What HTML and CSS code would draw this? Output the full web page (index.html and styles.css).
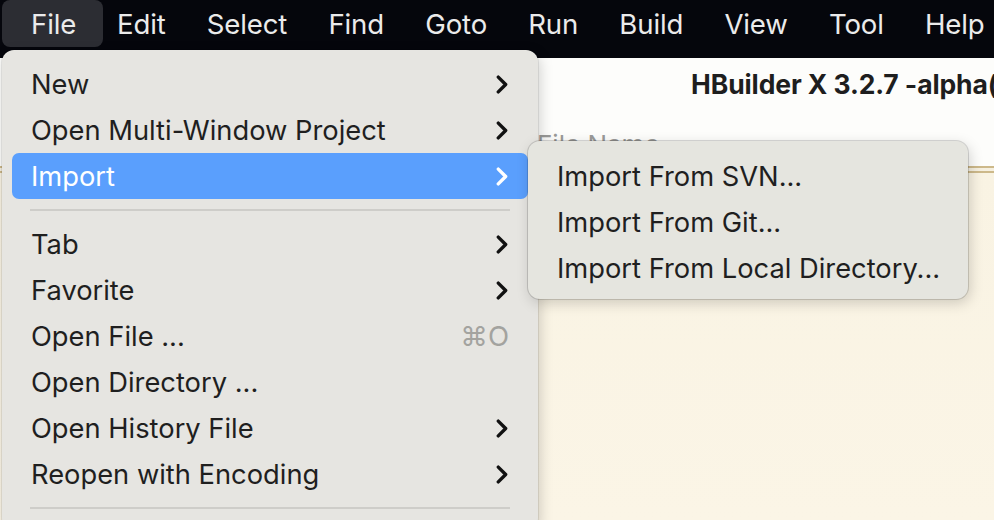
FILE: index.html
```html
<!DOCTYPE html>
<html>
<head>
<meta charset="utf-8">
<link rel="stylesheet" href="styles.css">
</head>
<body>
<div class="screen">
  <div class="menubar">
    <div class="mb-item active">File</div>
    <div class="mb-item">Edit</div>
    <div class="mb-item">Select</div>
    <div class="mb-item">Find</div>
    <div class="mb-item">Goto</div>
    <div class="mb-item">Run</div>
    <div class="mb-item">Build</div>
    <div class="mb-item">View</div>
    <div class="mb-item">Tool</div>
    <div class="mb-item">Help</div>
  </div>
  <div class="window">
    <div class="titlebar"><span class="title">HBuilder X 3.2.7 -alpha(</span></div>
    <div class="filename-row"><span class="filename">File Name</span></div>
    <div class="rule"></div>
    <div class="editor"></div>
  </div>

  <div class="menu">
    <div class="item"><span>New</span><svg class="chev" viewBox="0 0 12 18"><polyline points="2,2 9,9 2,16"/></svg></div>
    <div class="item"><span>Open Multi-Window Project</span><svg class="chev" viewBox="0 0 12 18"><polyline points="2,2 9,9 2,16"/></svg></div>
    <div class="item selected"><span>Import</span><svg class="chev" viewBox="0 0 12 18"><polyline points="2,2 9,9 2,16"/></svg></div>
    <div class="sep"></div>
    <div class="item"><span>Tab</span><svg class="chev" viewBox="0 0 12 18"><polyline points="2,2 9,9 2,16"/></svg></div>
    <div class="item"><span>Favorite</span><svg class="chev" viewBox="0 0 12 18"><polyline points="2,2 9,9 2,16"/></svg></div>
    <div class="item"><span>Open File ...</span><span class="shortcut">⌘O</span></div>
    <div class="item"><span>Open Directory ...</span></div>
    <div class="item"><span>Open History File</span><svg class="chev" viewBox="0 0 12 18"><polyline points="2,2 9,9 2,16"/></svg></div>
    <div class="item"><span>Reopen with Encoding</span><svg class="chev" viewBox="0 0 12 18"><polyline points="2,2 9,9 2,16"/></svg></div>
    <div class="sep"></div>
  </div>

  <div class="submenu">
    <div class="item"><span>Import From SVN...</span></div>
    <div class="item"><span>Import From Git...</span></div>
    <div class="item"><span>Import From Local Directory...</span></div>
  </div>
</div>
</body>
</html>
```

FILE: styles.css
```css
* { box-sizing: border-box; }
html, body {
  margin: 0;
  padding: 0;
  width: 994px;
  height: 520px;
  overflow: hidden;
  background: #05060c;
  font-family: "Inter", "Noto Sans", sans-serif;
}
.screen {
  position: relative;
  width: 994px;
  height: 520px;
  overflow: hidden;
  display: flex;
  flex-direction: column;
}
.menubar {
  height: 58px;
  flex: none;
  display: flex;
  align-items: flex-start;
  padding-left: 2px;
  background: #05060c;
  white-space: nowrap;
}
.mb-item {
  height: 47px;
  display: flex;
  align-items: center;
  padding: 0 20.6px;
  color: #ebebeb;
  font-size: 27.6px;
  letter-spacing: -0.15px;
  border-radius: 8px;
}
.mb-item.active {
  background: #2c2d33;
  padding: 0 27px 0 29px;
  width: 101px;
}
.mb-item.active + .mb-item {
  padding-left: 14px;
}
.window {
  flex: 1;
  display: flex;
  flex-direction: column;
  background: #fdfdfb;
}
.titlebar {
  height: 51px;
  display: flex;
  align-items: center;
  padding-left: 691px;
  white-space: nowrap;
}
.title {
  font-size: 26.5px;
  font-weight: 700;
  color: #1e1e1e;
  letter-spacing: -0.1px;
}
.filename-row {
  height: 57px;
  padding-left: 537px;
  padding-top: 20px;
  white-space: nowrap;
}
.filename {
  font-size: 26px;
  color: #9a9a98;
}
.rule {
  height: 7px;
  border-top: 2px solid #cdb98a;
  border-bottom: 2px solid #cdb98a;
  background: #f6f0e0;
}
.editor {
  flex: 1;
  background: linear-gradient(180deg, #f9f3e3 0%, #fbf5e6 100%);
}

.menu {
  position: absolute;
  left: 2px;
  top: 50px;
  width: 536px;
  height: 480px;
  padding: 11px 10px 0 10px;
  background: #e6e5e1;
  border-radius: 12px;
  box-shadow: 0 0 0 1px rgba(0,0,0,0.08), 2px 4px 14px rgba(0,0,0,0.18);
}
.item {
  height: 46px;
  display: flex;
  align-items: center;
  justify-content: space-between;
  padding: 0 19px;
  font-size: 27.3px;
  color: #1f1f1f;
  letter-spacing: 0;
  border-radius: 7px;
  white-space: nowrap;
}
.item.selected {
  background: #5a9ffd;
  color: #ffffff;
}
.chev {
  width: 13px;
  height: 19px;
  fill: none;
  stroke: #111;
  stroke-width: 3.2;
  stroke-linecap: round;
  stroke-linejoin: round;
}
.item.selected .chev { stroke: #fff; }
.shortcut {
  color: #a3a39f;
  font-size: 27.6px;
}
.sep {
  height: 22px;
  display: flex;
  align-items: center;
  padding: 0 18px;
}
.sep::before {
  content: "";
  flex: 1;
  height: 2px;
  background: #cecdc9;
}

.submenu {
  position: absolute;
  left: 528px;
  top: 141px;
  width: 440px;
  height: 158px;
  padding: 12px 10px 0 10px;
  background: #e5e5df;
  border-radius: 12px;
  box-shadow: 0 0 0 1px rgba(0,0,0,0.14), 2px 4px 14px rgba(0,0,0,0.18);
}
```
